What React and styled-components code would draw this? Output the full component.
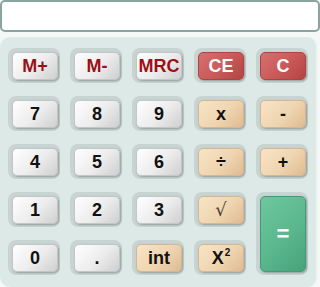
import React from "react";
import styled, { createGlobalStyle, css } from "styled-components";

const GlobalStyle = createGlobalStyle`
  html, body {
    margin: 0;
    padding: 0;
    background: #f4f8f7;
  }
  body {
    font-family: "Liberation Sans", Arial, sans-serif;
  }
`;

const keys = [
  { label: "M+", kind: "mem" },
  { label: "M-", kind: "mem" },
  { label: "MRC", kind: "mem" },
  { label: "CE", kind: "clear" },
  { label: "C", kind: "clear" },
  { label: "7" },
  { label: "8" },
  { label: "9" },
  { label: "x", kind: "op" },
  { label: "-", kind: "op" },
  { label: "4" },
  { label: "5" },
  { label: "6" },
  { label: "÷", kind: "op" },
  { label: "+", kind: "op" },
  { label: "1" },
  { label: "2" },
  { label: "3" },
  { label: "√", kind: "op", thin: true },
  { label: "=", kind: "equal", tall: true },
  { label: "0" },
  { label: "." },
  { label: "int", kind: "op" },
  { label: "sq", kind: "op" },
];

function Calculator() {
  return (
    <Wrapper>
      <Display type="text" readOnly value="" />
      <Pad>
        {keys.map((k) => (
          <Well key={k.label} $tall={k.tall}>
            <Key $kind={k.kind || "num"} $thin={k.thin}>
              {k.label === "sq" ? (
                <span>
                  X<Sup>2</Sup>
                </span>
              ) : (
                k.label
              )}
            </Key>
          </Well>
        ))}
      </Pad>
    </Wrapper>
  );
}

export default function App() {
  return (
    <>
      <GlobalStyle />
      <Calculator />
    </>
  );
}

const Wrapper = styled.div`
  width: 320px;
  height: 287px;
  display: flex;
  flex-direction: column;
  gap: 5px;
`;

const Display = styled.input`
  box-sizing: border-box;
  width: 320px;
  height: 32px;
  margin: 0;
  border: 2px solid #87a49f;
  border-radius: 5px;
  background: #fff;
  outline: none;
`;

const Pad = styled.div`
  box-sizing: border-box;
  flex: 1;
  width: 318px;
  padding: 11px 0 0 8px;
  background: #dde9e6;
  border-radius: 10px;
  border-right: 2px solid #edf4f2;
  display: grid;
  grid-template-columns: repeat(5, 52px);
  grid-auto-rows: 35px;
  column-gap: 10px;
  row-gap: 13px;
  align-content: start;
`;

const Well = styled.div`
  box-sizing: border-box;
  padding: 4px 2px 3px 4px;
  background: #c7d4d1;
  border-radius: 8px;
  display: flex;
  ${(p) =>
    p.$tall &&
    css`
      grid-row: span 2;
      grid-column: 5;
    `}
`;

const skins = {
  num: css`
    background: linear-gradient(135deg, #ffffff 0%, #ececec 55%, #cfcfcf 100%);
    color: #111;
    border-color: #c2c6c5;
  `,
  mem: css`
    background: linear-gradient(135deg, #ffffff 0%, #ececec 55%, #cfcfcf 100%);
    color: #9c1016;
    border-color: #c2c6c5;
  `,
  clear: css`
    background: linear-gradient(135deg, #d86e6e 0%, #c95959 55%, #b44444 100%);
    color: #fff;
    border-color: #ad4444;
  `,
  op: css`
    background: linear-gradient(135deg, #f8e4c6 0%, #efd5b0 55%, #ddbb92 100%);
    color: #111;
    border-color: #d3b793;
  `,
  equal: css`
    background: linear-gradient(135deg, #6fc79f 0%, #5bb78d 55%, #47a27a 100%);
    color: #fff;
    border-color: #45997a;
    font-size: 22px;
  `,
};

const Key = styled.button`
  flex: 1;
  margin: 0;
  padding: 0;
  border: 1px solid;
  border-radius: 5px;
  box-shadow: 1px 1px 2px rgba(0, 0, 0, 0.25);
  font-family: "Liberation Sans", Arial, sans-serif;
  font-weight: bold;
  font-size: 18px;
  line-height: 1;
  cursor: pointer;
  display: flex;
  align-items: center;
  justify-content: center;
  ${(p) => skins[p.$kind]}
  ${(p) =>
    p.$thin &&
    css`
      font-weight: normal;
      color: #4a3e33;
      font-family: "DejaVu Serif", serif;
    `}
`;

const Sup = styled.sup`
  font-size: 10px;
  vertical-align: 8px;
  line-height: 0;
  margin-left: 1px;
`;
